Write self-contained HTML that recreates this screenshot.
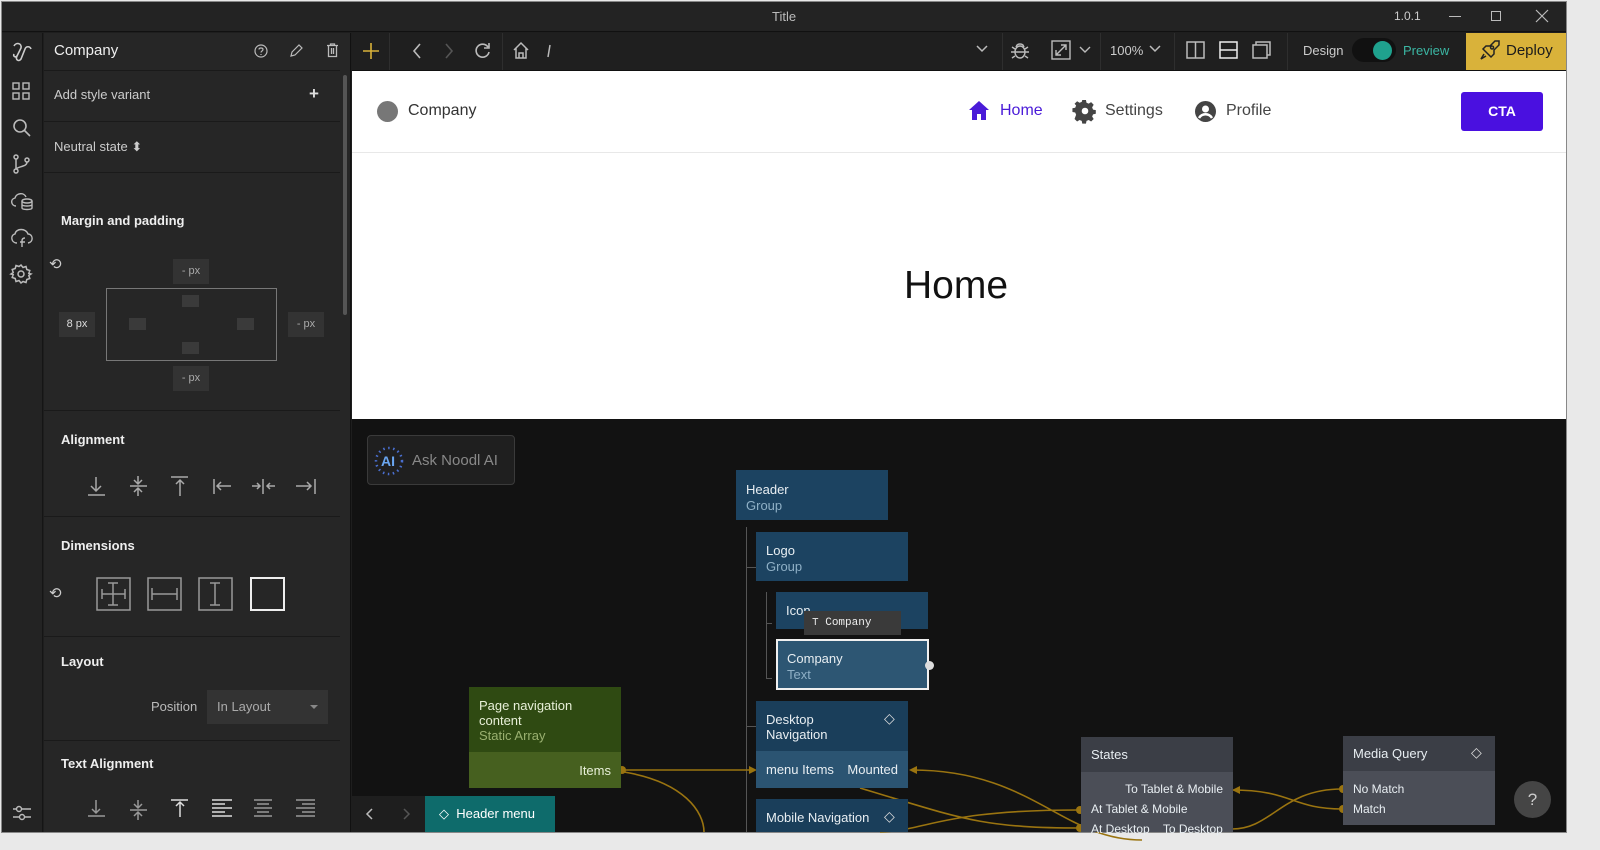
<!DOCTYPE html>
<html><head><meta charset="utf-8"><style>
*{box-sizing:border-box;margin:0;padding:0}
body{width:1600px;height:850px;background:#e9e9e9;font-family:"Liberation Sans",sans-serif;position:relative;overflow:hidden}
.a{position:absolute}
.t{position:absolute;white-space:nowrap}
svg{position:absolute;overflow:visible}
.node{position:absolute;color:#e8eef2;font-size:13px}
.sub{color:#8fb0c6}
</style></head><body>
<div class="a" style="left:1px;top:1px;width:1566px;height:832px;background:#1e1e1e;border:1px solid #888"></div>
<!-- title bar -->
<div class="a" style="left:2px;top:2px;width:1564px;height:30px;background:#232323;border-bottom:1px solid #111"></div>
<div class="t" style="left:772px;top:9px;color:#bbb;font-size:13px">Title</div>
<div class="t" style="left:1394px;top:9px;color:#ccc;font-size:12px">1.0.1</div>
<div class="a" style="left:1449px;top:16px;width:12px;height:1px;background:#bbb"></div>
<div class="a" style="left:1491px;top:11px;width:10px;height:10px;border:1px solid #bbb"></div>
<svg style="left:1536px;top:10px" width="12" height="12"><path d="M0 0L12 12M12 0L0 12" stroke="#bbb" stroke-width="1.2"/></svg>
<!-- rail -->
<div class="a" style="left:2px;top:33px;width:41px;height:799px;background:#232323;border-right:1px solid #151515"></div>
<svg style="left:11px;top:40px" width="22" height="22" fill="none" stroke="#ccc" stroke-width="1.6"><path d="M3 6c2-4 8-3 7 2l-4 8c-2 4 2 6 4 3l4-10c1-3 5-3 6 0M6 16c-2 2-4 0-3-2"/></svg>
<svg style="left:12px;top:82px" width="18" height="18" fill="none" stroke="#bbb" stroke-width="1.4"><rect x="1" y="1" width="6" height="6"/><rect x="11" y="1" width="6" height="6"/><rect x="1" y="11" width="6" height="6"/><rect x="11" y="11" width="6" height="6"/></svg>
<svg style="left:12px;top:118px" width="20" height="20" fill="none" stroke="#bbb" stroke-width="1.6"><circle cx="8" cy="8" r="6"/><path d="M12.5 12.5L18 18"/></svg>
<svg style="left:13px;top:154px" width="18" height="20" fill="none" stroke="#bbb" stroke-width="1.5"><circle cx="3" cy="3" r="2"/><circle cx="3" cy="17" r="2"/><circle cx="14" cy="6" r="2"/><path d="M3 5v10M14 8c0 5-8 4-11 7"/></svg>
<svg style="left:10px;top:190px" width="24" height="22" fill="none" stroke="#bbb" stroke-width="1.4"><path d="M6 16C1 16 0 9 5 8c1-5 9-6 11-1"/><ellipse cx="17" cy="11" rx="5" ry="2"/><path d="M12 11v7c0 2 10 2 10 0v-7M12 14.5c0 2 10 2 10 0"/></svg>
<svg style="left:10px;top:226px" width="24" height="22" fill="none" stroke="#bbb" stroke-width="1.4"><path d="M7 17C1 17 0 9 5 8c1-6 11-6 13 0 5 0 6 8 0 9"/><path d="M15 12c-2 0-3 1-3 3v6M10 16h5"/></svg>
<svg style="left:11px;top:264px" width="20" height="20" fill="none" stroke="#bbb" stroke-width="1.5"><circle cx="10" cy="10" r="3"/><path d="M10 1l2 2.5 3-1 .8 3 3 1-1 3L20 10l-2.2 1.5 1 3-3 1-.8 3-3-1L10 19l-2-2.5-3 1-.8-3-3-1 1-3L0 10l2.2-1.5-1-3 3-1 .8-3 3 1z"/></svg>
<svg style="left:13px;top:805px" width="18" height="16" fill="none" stroke="#bbb" stroke-width="1.4"><path d="M0 4h18M0 12h18"/><circle cx="6" cy="4" r="2.5" fill="#232323"/><circle cx="9" cy="12" r="2.5" fill="#232323"/></svg>
<!-- panel -->
<div class="a" style="left:44px;top:33px;width:307px;height:799px;background:#262626;border-right:1px solid #111"></div>
<div class="t" style="left:54px;top:42px;color:#eee;font-size:15px">Company</div>
<svg style="left:254px;top:44px" width="14" height="14" fill="none" stroke="#bbb" stroke-width="1.2"><circle cx="7" cy="7" r="6"/><path d="M5 5.5c0-2 4-2 4 0 0 1.5-2 1.5-2 3M7 10v1"/></svg>
<svg style="left:290px;top:44px" width="13" height="13" fill="none" stroke="#bbb" stroke-width="1.2"><path d="M1 12l1-4 7-7 3 3-7 7z"/></svg>
<svg style="left:327px;top:43px" width="11" height="14" fill="none" stroke="#bbb" stroke-width="1.3"><path d="M0 2.5h11M3.5 2.5V1h4v1.5M1.5 2.5v11h8v-11M4.5 5v6M6.5 5v6"/></svg>
<div class="a" style="left:44px;top:70px;width:296px;height:1px;background:#1a1a1a"></div>
<div class="t" style="left:54px;top:87px;color:#ccc;font-size:13px">Add style variant</div>
<div class="t" style="left:309px;top:84px;color:#ddd;font-size:17px;font-weight:bold">+</div>
<div class="a" style="left:44px;top:121px;width:296px;height:1px;background:#1a1a1a"></div>
<div class="t" style="left:54px;top:139px;color:#ccc;font-size:13px">Neutral state ⬍</div>
<div class="a" style="left:44px;top:172px;width:296px;height:1px;background:#1a1a1a"></div>
<div class="a" style="left:343px;top:75px;width:4px;height:240px;background:#555;border-radius:2px"></div>
<div class="t" style="left:61px;top:213px;color:#eee;font-size:13px;font-weight:bold">Margin and padding</div>
<div class="t" style="left:49px;top:255px;color:#ccc;font-size:15px">⟲</div>
<div class="a" style="left:173px;top:259px;width:36px;height:25px;background:#333;color:#aaa;font-size:11px;text-align:center;line-height:25px">- px</div>
<div class="a" style="left:173px;top:366px;width:36px;height:25px;background:#333;color:#aaa;font-size:11px;text-align:center;line-height:25px">- px</div>
<div class="a" style="left:59px;top:312px;width:36px;height:25px;background:#333;color:#ddd;font-size:11px;text-align:center;line-height:25px">8 px</div>
<div class="a" style="left:288px;top:312px;width:36px;height:25px;background:#333;color:#aaa;font-size:11px;text-align:center;line-height:25px">- px</div>
<div class="a" style="left:106px;top:288px;width:171px;height:73px;border:1px solid #777"></div>
<div class="a" style="left:182px;top:295px;width:17px;height:12px;background:#3a3a3a"></div>
<div class="a" style="left:182px;top:342px;width:17px;height:12px;background:#3a3a3a"></div>
<div class="a" style="left:129px;top:318px;width:17px;height:12px;background:#3a3a3a"></div>
<div class="a" style="left:237px;top:318px;width:17px;height:12px;background:#3a3a3a"></div>
<div class="a" style="left:44px;top:410px;width:296px;height:1px;background:#1a1a1a"></div>
<div class="t" style="left:61px;top:432px;color:#eee;font-size:13px;font-weight:bold">Alignment</div>
<svg style="left:86px;top:475px" width="240" height="22" fill="none" stroke="#aaa" stroke-width="1.5">
<path d="M10 2v14M5 11l5 5 5-5M2 20h17"/>
<path d="M52 1v7M48 5l4 4 4-4M44 11h17M52 21v-7M48 17l4-4 4 4"/>
<path d="M85 2h17M94 5v16M90 9l4-4 4 4"/>
<path d="M128 4v15M131 11h14M135 7l-4 4 4 4"/>
<path d="M177 4v15M166 11h8M171 8l3 3-3 3M189 11h-8M184 8l-3 3 3 3"/>
<path d="M229 4v15M210 11h15M221 7l4 4-4 4"/></svg>
<div class="a" style="left:44px;top:516px;width:296px;height:1px;background:#1a1a1a"></div>
<div class="t" style="left:61px;top:538px;color:#eee;font-size:13px;font-weight:bold">Dimensions</div>
<div class="t" style="left:49px;top:584px;color:#ccc;font-size:15px">⟲</div>
<svg style="left:97px;top:578px" width="190" height="34" fill="none" stroke="#999" stroke-width="1.5">
<rect x="0" y="0" width="33" height="32"/><path d="M5 16h23M16 5v22M5 11v10M28 11v10M11 5h10M11 27h10"/>
<rect x="51" y="0" width="33" height="32"/><path d="M55 16h25M55 10v12M80 10v12"/>
<rect x="102" y="0" width="33" height="32"/><path d="M118 5v22M113 5h10M113 27h10"/>
<rect x="154" y="0" width="33" height="32" stroke="#eee" stroke-width="2"/></svg>
<div class="a" style="left:44px;top:636px;width:296px;height:1px;background:#1a1a1a"></div>
<div class="t" style="left:61px;top:654px;color:#eee;font-size:13px;font-weight:bold">Layout</div>
<div class="t" style="left:151px;top:699px;color:#bbb;font-size:13px">Position</div>
<div class="a" style="left:207px;top:690px;width:121px;height:34px;background:#333"></div>
<div class="t" style="left:217px;top:699px;color:#aaa;font-size:13px">In Layout</div>
<div class="a" style="left:310px;top:705px;border:4px solid transparent;border-top:4px solid #888"></div>
<div class="a" style="left:44px;top:740px;width:296px;height:1px;background:#1a1a1a"></div>
<div class="t" style="left:61px;top:756px;color:#eee;font-size:13px;font-weight:bold">Text Alignment</div>
<svg style="left:86px;top:800px" width="240" height="22" fill="none" stroke="#999" stroke-width="1.5">
<path d="M10 0v13M6 9l4 4 4-4M2 16h17"/>
<path d="M52 0v7M48 4l4 4 4-4M44 10h17M52 20v-7M48 16l4-4 4 4"/>
<path d="M85 0h17M94 2v15M90 6l4-4 4 4" stroke="#ddd"/>
<path d="M126 0h20M126 4h13M126 8h20M126 12h13M126 16h20" stroke="#ddd"/>
<path d="M168 0h18M171 4h12M168 8h18M171 12h12M168 16h18"/>
<path d="M210 0h19M216 4h13M210 8h19M216 12h13M210 16h19"/></svg>
<!-- toolbar -->
<div class="a" style="left:352px;top:33px;width:1214px;height:38px;background:#1f1f1f;border-bottom:1px solid #111"></div>
<div class="a" style="left:389px;top:33px;width:1px;height:37px;background:#2e2e2e"></div>
<div class="a" style="left:502px;top:33px;width:1px;height:37px;background:#2e2e2e"></div>
<div class="a" style="left:1002px;top:33px;width:1px;height:37px;background:#2e2e2e"></div>
<div class="a" style="left:1100px;top:33px;width:1px;height:37px;background:#2e2e2e"></div>
<div class="a" style="left:1174px;top:33px;width:1px;height:37px;background:#2e2e2e"></div>
<div class="a" style="left:1287px;top:33px;width:1px;height:37px;background:#2e2e2e"></div>
<svg style="left:363px;top:43px" width="16" height="16" stroke="#d9b23a" stroke-width="1.6"><path d="M8 0v16M0 8h16"/></svg>
<svg style="left:412px;top:43px" width="80" height="16" fill="none" stroke="#bbb" stroke-width="1.6"><path d="M8 1L2 8l6 7"/><path d="M34 1l6 7-6 7" stroke="#555"/><path d="M76 4a6.5 6.5 0 1 0 1 5M77 0v5h-5"/></svg>
<svg style="left:513px;top:42px" width="40" height="17" fill="none" stroke="#bbb" stroke-width="1.5"><path d="M1 8L8 1l7 7M3 6v10h10V6M6 16v-5h4v5"/><path d="M37 3l-2 12"/></svg>
<svg style="left:976px;top:45px" width="12" height="8" fill="none" stroke="#bbb" stroke-width="1.5"><path d="M1 1l5 5 5-5"/></svg>
<svg style="left:1010px;top:40px" width="20" height="20" fill="none" stroke="#bbb" stroke-width="1.4"><ellipse cx="10" cy="12" rx="5" ry="6"/><path d="M6 7c1-4 7-4 8 0M5 12H1M19 12h-4M5 16l-3 2M15 16l3 2M5 9L2 7M15 9l3-2M5 12h10"/></svg>
<svg style="left:1051px;top:40px" width="45" height="20" fill="none" stroke="#bbb" stroke-width="1.4"><rect x="1" y="1" width="18" height="18"/><path d="M5 15l10-10M10 5h5v5M5 10v5h5"/><path d="M29 7l5 5 5-5"/></svg>
<div class="t" style="left:1110px;top:43px;color:#ccc;font-size:13px">100%</div>
<svg style="left:1149px;top:45px" width="12" height="8" fill="none" stroke="#bbb" stroke-width="1.5"><path d="M1 1l5 5 5-5"/></svg>
<svg style="left:1186px;top:41px" width="90" height="18" fill="none" stroke="#bbb" stroke-width="1.5"><rect x="1" y="1" width="17" height="16"/><path d="M9.5 1v16"/><rect x="34" y="1" width="17" height="16" stroke="#eee"/><path d="M34 9h17" stroke="#eee"/><rect x="67" y="4" width="14" height="13"/><path d="M70 4V1h14v13h-3"/></svg>
<div class="t" style="left:1303px;top:43px;color:#ccc;font-size:13px">Design</div>
<div class="a" style="left:1352px;top:38px;width:44px;height:24px;background:#111;border-radius:12px"></div>
<div class="a" style="left:1373px;top:41px;width:19px;height:19px;background:#1fa28e;border-radius:50%"></div>
<div class="t" style="left:1403px;top:43px;color:#3bb6a3;font-size:13px">Preview</div>
<div class="a" style="left:1466px;top:33px;width:100px;height:37px;background:#d9b23a"></div>
<svg style="left:1480px;top:40px" width="20" height="20" fill="none" stroke="#222" stroke-width="1.5"><path d="M7 13L3 9l3-3h4l5-5h4v4l-5 5v4l-3 3-4-4zM12 6a1.5 1.5 0 1 0 .1 0M4 14l-3 5 5-3"/></svg>
<div class="t" style="left:1506px;top:42px;color:#1b1b1b;font-size:15px">Deploy</div>
<!-- preview -->
<div class="a" style="left:352px;top:71px;width:1214px;height:348px;background:#fff"></div>
<div class="a" style="left:352px;top:152px;width:1214px;height:1px;background:#e8e8e8"></div>
<div class="a" style="left:377px;top:101px;width:21px;height:21px;border-radius:50%;background:#777"></div>
<div class="t" style="left:408px;top:102px;color:#333;font-size:16px">Company</div>
<svg style="left:969px;top:101px" width="20" height="19" fill="#4a1bd8"><path d="M10 0L0 9h3v10h5v-6h4v6h5V9h3z"/></svg>
<div class="t" style="left:1000px;top:102px;color:#4a1bd8;font-size:16px">Home</div>
<svg style="left:1074px;top:100px" width="22" height="22" fill="#444"><path d="M9 0h4l.6 3 2.4 1 2.6-1.7 2.8 2.8L19.7 8l1 2.4 3 .6v4l-3 .6-1 2.4 1.7 2.6-2.8 2.8-2.6-1.7-2.4 1-.6 3H9l-.6-3-2.4-1-2.6 1.7-2.8-2.8L2.3 16l-1-2.4-3-.6v-4l3-.6 1-2.4L.6 4.1 3.4 1.3 6 3l2.4-1z" transform="scale(.92)"/><circle cx="11" cy="11" r="3.3" fill="#fff"/></svg>
<div class="t" style="left:1105px;top:102px;color:#444;font-size:16px">Settings</div>
<svg style="left:1195px;top:101px" width="21" height="21"><circle cx="10.5" cy="10.5" r="10.5" fill="#444"/><circle cx="10.5" cy="8" r="3.5" fill="#fff"/><path d="M4 17c3-5 10-5 13 0" stroke="#fff" stroke-width="2.5" fill="none"/></svg>
<div class="t" style="left:1226px;top:102px;color:#444;font-size:16px">Profile</div>
<div class="a" style="left:1461px;top:92px;width:82px;height:39px;background:#4a10e0;border-radius:3px;color:#fff;font-size:14px;font-weight:bold;text-align:center;line-height:39px">CTA</div>
<div class="t" style="left:904px;top:264px;color:#111;font-size:39px">Home</div>
<!-- canvas -->
<div class="a" style="left:352px;top:419px;width:1214px;height:413px;background:#121212"></div>
<div class="a" style="left:367px;top:435px;width:148px;height:50px;background:#1f1f1f;border:1px solid #3a3a3a;border-radius:4px"></div>
<svg style="left:373px;top:445px" width="32" height="32"><circle cx="16" cy="16" r="13" fill="none" stroke="#4a6fd0" stroke-width="2.5" stroke-dasharray="1.5 3.5"/><text x="8" y="21" font-family="Liberation Sans" font-size="14" font-weight="bold" fill="#6aa6f0">AI</text></svg>
<div class="t" style="left:412px;top:452px;color:#888;font-size:15px">Ask Noodl AI</div>
<div class="a" style="left:746px;top:527px;width:1px;height:305px;background:#555"></div>
<div class="a" style="left:746px;top:567px;width:10px;height:1px;background:#555"></div>
<div class="a" style="left:746px;top:726px;width:10px;height:1px;background:#555"></div>
<div class="a" style="left:766px;top:592px;width:1px;height:86px;background:#555"></div>
<div class="a" style="left:766px;top:678px;width:6px;height:1px;background:#555"></div>
<div class="a" style="left:766px;top:623px;width:6px;height:1px;background:#555"></div>
<svg style="left:352px;top:419px" width="1214" height="413" fill="none" stroke="#9a7410" stroke-width="1.6">
<path d="M270 351H400"/><path d="M272 353c60 10 80 40 80 60"/>
<path d="M560 351c120 0 150 70 230 70"/>
<path d="M728 391c-140 0-150 20-200 22"/><path d="M728 409c-100 0-120-10-220-40"/>
<path d="M880 371c60 0 60 19 110 19"/><path d="M990 370c-60 0-70 40-110 40"/>
</svg>
<svg style="left:350px;top:419px" width="1214" height="413" fill="#9a7410"><circle cx="272" cy="351" r="4"/><path d="M407 351l-8-4v8z"/><path d="M559 351l8-4v8z"/><circle cx="730" cy="391" r="4"/><circle cx="730" cy="409" r="4"/><path d="M882 371l8-4v8z"/><circle cx="993" cy="370" r="4"/><circle cx="993" cy="390" r="4"/></svg>
<div class="node" style="left:736px;top:470px;width:152px;height:50px;background:#1c4361;padding:12px 10px;line-height:16px">Header<br><span class="sub">Group</span></div>
<div class="node" style="left:756px;top:532px;width:152px;height:49px;background:#1c4361;padding:11px 10px;line-height:16px">Logo<br><span class="sub">Group</span></div>
<div class="node" style="left:776px;top:592px;width:152px;height:37px;background:#1c4361;padding:11px 10px">Icon</div>
<div class="a" style="left:804px;top:611px;width:97px;height:24px;background:#3a3a3a;color:#eee;font-family:'Liberation Mono',monospace;font-size:11px;line-height:24px;padding-left:8px">⊤ Company</div>
<div class="node" style="left:776px;top:639px;width:153px;height:51px;background:#2d5673;border:2px solid #f0f0f0;padding:10px 9px;line-height:16px">Company<br><span class="sub">Text</span></div>
<div class="a" style="left:925px;top:661px;width:9px;height:9px;border-radius:50%;background:#ddd"></div>
<div class="node" style="left:756px;top:701px;width:152px;height:50px;background:#1a3e5a;padding:11px 10px;line-height:15px">Desktop<br>Navigation</div>
<div class="t" style="left:884px;top:710px;color:#ddd;font-size:14px">◇</div>
<div class="node" style="left:756px;top:751px;width:152px;height:37px;background:#2b5472;padding:11px 10px">menu Items<span style="position:absolute;right:10px">Mounted</span></div>
<div class="node" style="left:756px;top:799px;width:152px;height:33px;background:#1a3e5a;padding:11px 10px">Mobile Navigation</div>
<div class="t" style="left:884px;top:808px;color:#ddd;font-size:14px">◇</div>
<div class="node" style="left:469px;top:687px;width:152px;height:65px;background:#2f4a12;padding:11px 10px;line-height:15px;color:#e8f0d8">Page navigation<br>content<br><span style="color:#9ab070">Static Array</span></div>
<div class="node" style="left:469px;top:752px;width:152px;height:36px;background:#46601f;padding:11px 10px;text-align:right;color:#e8f0d8">Items</div>
<div class="node" style="left:1081px;top:737px;width:152px;height:35px;background:#3b3e46;padding:10px 10px">States</div>
<div class="node" style="left:1081px;top:772px;width:152px;height:60px;background:#4b4e57;font-size:12px;line-height:20px;padding-top:7px">
<div style="text-align:right;padding-right:10px">To Tablet &amp; Mobile</div><div style="padding-left:10px">At Tablet &amp; Mobile</div><div style="padding-left:10px">At Desktop &nbsp;&nbsp; To Desktop</div></div>
<div class="node" style="left:1343px;top:736px;width:152px;height:35px;background:#3b3e46;padding:10px 10px">Media Query</div>
<div class="t" style="left:1471px;top:744px;color:#ddd;font-size:14px">◇</div>
<div class="node" style="left:1343px;top:771px;width:152px;height:54px;background:#4b4e57;font-size:12px;line-height:20px;padding:8px 10px">No Match<br>Match</div>
<div class="a" style="left:1514px;top:781px;width:37px;height:37px;border-radius:50%;background:#454545;color:#ccc;font-size:17px;text-align:center;line-height:37px">?</div>
<div class="a" style="left:352px;top:796px;width:73px;height:36px;background:#1e1e1e"></div>
<svg style="left:366px;top:808px" width="45" height="12" fill="none" stroke-width="1.5"><path d="M6 1L1 6l5 5" stroke="#bbb"/><path d="M38 1l5 5-5 5" stroke="#555"/></svg>
<div class="a" style="left:425px;top:796px;width:130px;height:36px;background:#0e6b6b"></div>
<div class="t" style="left:439px;top:806px;color:#fff;font-size:13px">◇ &nbsp;Header menu</div>
</body></html>
